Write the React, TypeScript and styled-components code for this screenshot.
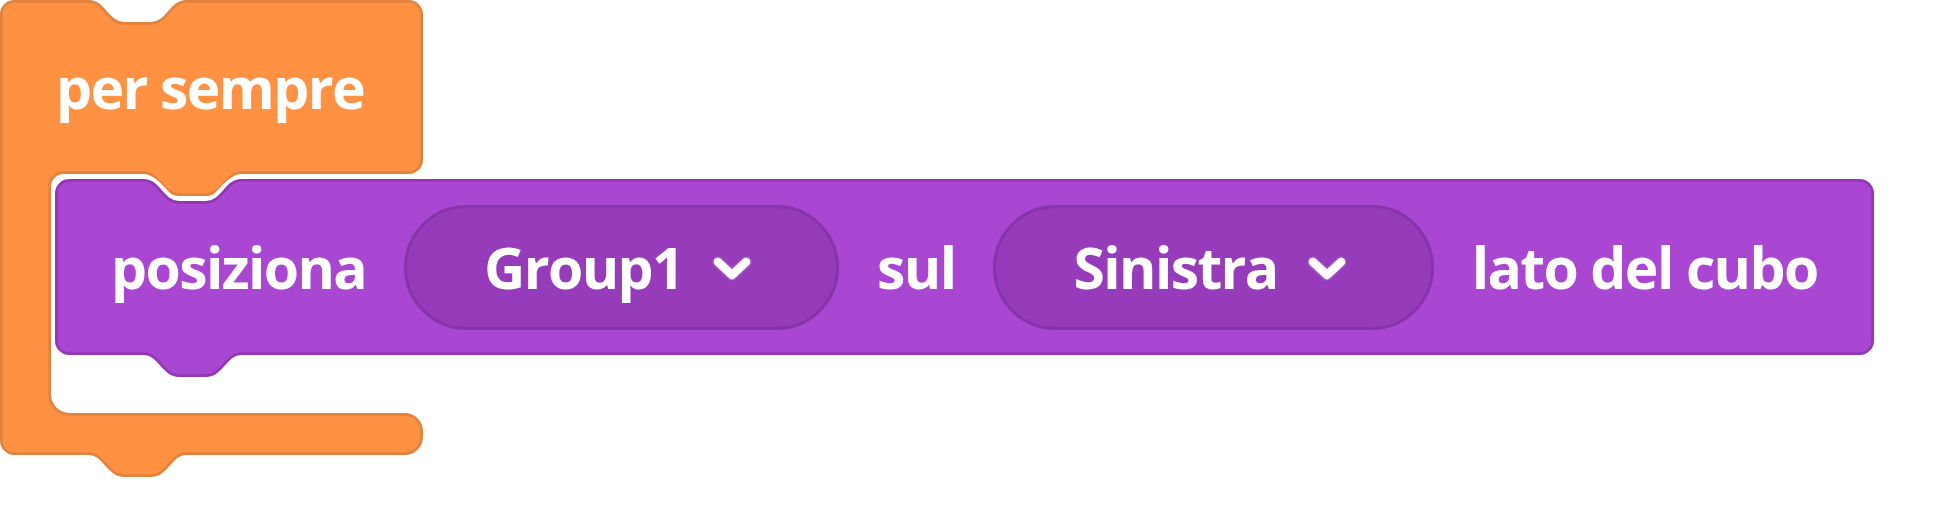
import React, { useLayoutEffect, useRef, useState } from "react";
import styled, { createGlobalStyle } from "styled-components";

const GlobalStyle = createGlobalStyle`
  html, body {
    margin: 0;
    padding: 0;
    background: #ffffff;
  }
  body {
    font-family: "Open Sans", "Noto Sans", sans-serif;
  }
`;

const colors = {
  control: "#FF9142",
  controlStroke: "#E2823E",
  looks: "#A946D2",
  looksStroke: "#9237B8",
  field: "#963BBA",
  fieldStroke: "#8734A8",
};

// block geometry (scratch-style shapes, scaled)
const STROKE = 2.7;
const HALF = STROKE / 2;
const NOTCH_START = 89;
const NOTCH_W = 97;

const C_WIDTH = 423;
const C_TOP = 174;
const C_ARM = 51;
const C_MOUTH_BOTTOM = 413;
const C_BOTTOM = 455;
const C_TAB = 144;

// smooth wave notch: 35 down, 27 flat, 35 up
const notchDown = "c 15,0 19,22 35,22 h 27 c 16,0 20,-22 35,-22";
const notchBack = "c -15,0 -19,22 -35,22 h -27 c -16,0 -20,-22 -35,-22";

const statementPath = (w: number, h: number) => {
  const r = 13;
  const o = HALF;
  return [
    `M ${o},${o + r}`,
    `a ${r},${r} 0 0 1 ${r},${-r}`,
    `H ${NOTCH_START}`,
    notchDown,
    `H ${w - o - r}`,
    `a ${r},${r} 0 0 1 ${r},${r}`,
    `V ${h - o - r}`,
    `a ${r},${r} 0 0 1 ${-r},${r}`,
    `H ${NOTCH_START + NOTCH_W}`,
    notchBack,
    `H ${o + r}`,
    `a ${r},${r} 0 0 1 ${-r},${-r}`,
    "Z",
  ].join(" ");
};

const cPath = () => {
  const o = HALF;
  const R = 13;
  const Ri = 14;
  const Rb = 20;
  const Re = 17;
  return [
    `M ${o},${o + R}`,
    `a ${R},${R} 0 0 1 ${R},${-R}`,
    `H ${NOTCH_START}`,
    notchDown,
    `H ${C_WIDTH - o - R}`,
    `a ${R},${R} 0 0 1 ${R},${R}`,
    `V ${C_TOP - o - R}`,
    `a ${R},${R} 0 0 1 ${-R},${R}`,
    `H ${C_TAB + NOTCH_W}`,
    notchBack,
    `H ${C_ARM - o + Ri}`,
    `a ${Ri},${Ri} 0 0 0 ${-Ri},${Ri}`,
    `V ${C_MOUTH_BOTTOM + o - Rb}`,
    `a ${Rb},${Rb} 0 0 0 ${Rb},${Rb}`,
    `H ${C_WIDTH - o - Re}`,
    `a ${Re},${Re} 0 0 1 ${Re},${Re}`,
    `V ${C_BOTTOM - o - Re}`,
    `a ${Re},${Re} 0 0 1 ${-Re},${Re}`,
    `H ${NOTCH_START + NOTCH_W}`,
    notchBack,
    `H ${o + R}`,
    `a ${R},${R} 0 0 1 ${-R},${-R}`,
    "Z",
  ].join(" ");
};

const useSize = () => {
  const ref = useRef<HTMLDivElement>(null);
  const [size, setSize] = useState({ w: 0, h: 0 });

  useLayoutEffect(() => {
    const el = ref.current;
    if (!el) return;
    const update = () => setSize({ w: el.offsetWidth, h: el.offsetHeight });
    update();
    const ro = new ResizeObserver(update);
    ro.observe(el);
    return () => ro.disconnect();
  }, []);

  return [ref, size] as const;
};

const Workspace = styled.div`
  height: 512px;
  overflow: hidden;
`;

const Shape = styled.svg`
  position: absolute;
  left: 0;
  top: 0;
  overflow: visible;
  pointer-events: none;
`;

const CBlock = styled.div`
  position: relative;
  display: flex;
  flex-direction: column;
  width: ${C_WIDTH}px;
`;

const Header = styled.div`
  position: relative;
  height: ${C_TOP}px;
  display: flex;
  align-items: center;
  padding-left: 56px;
`;

const Mouth = styled.div`
  position: relative;
  height: ${C_MOUTH_BOTTOM - C_TOP}px;
  box-sizing: border-box;
  padding: 5px 0 0 55px;
  display: flex;
  align-items: flex-start;
`;

const Footer = styled.div`
  position: relative;
  height: ${C_BOTTOM - C_MOUTH_BOTTOM}px;
`;

const Label = styled.span`
  position: relative;
  font-family: "Open Sans", "Noto Sans", sans-serif;
  font-weight: 700;
  font-size: 57px;
  letter-spacing: -1.6px;
  line-height: normal;
  color: #ffffff;
  white-space: nowrap;
`;

const Statement = styled.div`
  position: relative;
  flex: none;
  height: 176px;
  box-sizing: border-box;
  display: flex;
  align-items: center;
  gap: 38px;
  padding: 0 56px 0 56px;
`;

const Dropdown = styled.div`
  position: relative;
  height: 125px;
  box-sizing: border-box;
  display: flex;
  align-items: center;
  gap: 30px;
  padding: 0 85px 0 77px;
  background: ${colors.field};
  border: 3px solid ${colors.fieldStroke};
  border-radius: 63px;
`;

const Chevron = styled.svg`
  flex: none;
  margin-top: 3px;
  filter: drop-shadow(0 0 1px rgba(255, 255, 255, 0.6));
`;

const ArrowIcon = () => (
  <Chevron width="38" height="24" viewBox="0 0 38 24">
    <polyline
      points="5,5 19,18 33,5"
      fill="none"
      stroke="#ffffff"
      strokeWidth="8.5"
      strokeLinecap="round"
      strokeLinejoin="round"
    />
  </Chevron>
);

type Part = { kind: "text" | "dropdown"; value: string };

const parts: Part[] = [
  { kind: "text", value: "posiziona" },
  { kind: "dropdown", value: "Group1" },
  { kind: "text", value: "sul" },
  { kind: "dropdown", value: "Sinistra" },
  { kind: "text", value: "lato del cubo" },
];

const SetSideBlock = () => {
  const [ref, size] = useSize();
  const d = statementPath(size.w, size.h);

  return (
    <Statement ref={ref}>
      {size.w > 0 && (
        <Shape width={size.w} height={size.h}>
          <path d={d} fill="#ffffff" stroke="#ffffff" strokeWidth={STROKE + 8} strokeLinejoin="round" />
          <path d={d} fill={colors.looks} stroke={colors.looksStroke} strokeWidth={STROKE} />
        </Shape>
      )}
      {parts.map((part, i) =>
        part.kind === "text" ? (
          <Label key={i}>{part.value}</Label>
        ) : (
          <Dropdown key={i}>
            <Label>{part.value}</Label>
            <ArrowIcon />
          </Dropdown>
        )
      )}
    </Statement>
  );
};

const ForeverBlock = () => (
  <CBlock>
    <Shape width={C_WIDTH} height={C_BOTTOM + 26}>
      <path d={cPath()} fill={colors.control} stroke={colors.controlStroke} strokeWidth={STROKE} />
    </Shape>
    <Header>
      <Label>per sempre</Label>
    </Header>
    <Mouth>
      <SetSideBlock />
    </Mouth>
    <Footer />
  </CBlock>
);

const App = () => (
  <>
    <GlobalStyle />
    <Workspace>
      <ForeverBlock />
    </Workspace>
  </>
);

export default App;
